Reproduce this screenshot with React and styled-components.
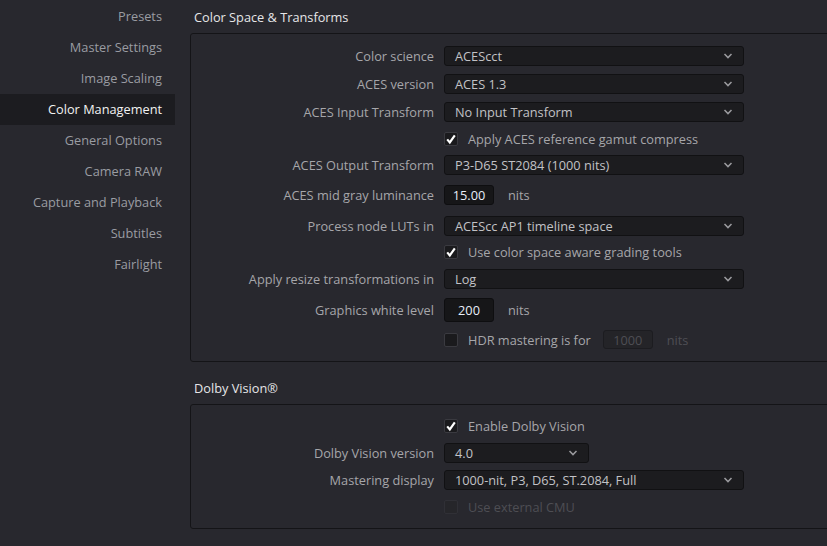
import styled, { createGlobalStyle } from "styled-components"

const GlobalStyle = createGlobalStyle`
    body {
        margin: 0;
        background-color: #28282e;
        font-family: "Open Sans", "Liberation Sans", sans-serif;
        overflow: hidden;
    }
`

const navItems = [
    "Presets",
    "Master Settings",
    "Image Scaling",
    "Color Management",
    "General Options",
    "Camera RAW",
    "Capture and Playback",
    "Subtitles",
    "Fairlight",
]

function Chevron() {
    return (
        <svg width="10" height="6" viewBox="0 0 10 6">
            <polyline points="1.5,1 5,4.6 8.5,1" fill="none" stroke="#9a9a9e" strokeWidth="1.5" />
        </svg>
    )
}

function Check({ checked, disabled, children }) {
    return (
        <CheckWrap>
            <Box $disabled={disabled}>
                {checked && (
                    <svg width="14" height="14" viewBox="0 0 14 14">
                        <path d="M3.2 7.4 L5.8 10.4 L10.8 3.4" fill="none" stroke="#fff" strokeWidth="2.2" />
                    </svg>
                )}
            </Box>
            <CheckText $disabled={disabled}>{children}</CheckText>
        </CheckWrap>
    )
}

function Select({ value, width = 300 }) {
    return (
        <Dropdown $w={width}>
            <span>{value}</span>
            <Chevron />
        </Dropdown>
    )
}

function App() {
    return (
        <Page>
            <GlobalStyle />
            <Sidebar>
                {navItems.map((item) => (
                    <NavItem key={item} $active={item === "Color Management"}>{item}</NavItem>
                ))}
            </Sidebar>
            <Main>
                <SectionTitle $top={1}>Color Space &amp; Transforms</SectionTitle>
                <Panel $pt={8} $pb={7}>
                    <Row $h={28}>
                        <Label>Color science</Label>
                        <Select value="ACEScct" />
                    </Row>
                    <Row $h={28}>
                        <Label>ACES version</Label>
                        <Select value="ACES 1.3" />
                    </Row>
                    <Row $h={28}>
                        <Label>ACES Input Transform</Label>
                        <Select value="No Input Transform" />
                    </Row>
                    <Row $h={26}>
                        <Label />
                        <Check checked>Apply ACES reference gamut compress</Check>
                    </Row>
                    <Row $h={26}>
                        <Label>ACES Output Transform</Label>
                        <Select value="P3-D65 ST2084 (1000 nits)" />
                    </Row>
                    <Row $h={34}>
                        <Label>ACES mid gray luminance</Label>
                        <NumberBox $h={20}>15.00</NumberBox>
                        <Unit>nits</Unit>
                    </Row>
                    <Row $h={28}>
                        <Label>Process node LUTs in</Label>
                        <Select value="ACEScc AP1 timeline space" />
                    </Row>
                    <Row $h={24}>
                        <Label />
                        <Check checked>Use color space aware grading tools</Check>
                    </Row>
                    <Row $h={30}>
                        <Label>Apply resize transformations in</Label>
                        <Select value="Log" />
                    </Row>
                    <Row $h={31}>
                        <Label>Graphics white level</Label>
                        <NumberBox $h={24}>200</NumberBox>
                        <Unit>nits</Unit>
                    </Row>
                    <Row $h={29}>
                        <Label />
                        <Check>HDR mastering is for</Check>
                        <NumberBox $h={19} $disabled>1000</NumberBox>
                        <Unit $disabled>nits</Unit>
                    </Row>
                </Panel>

                <SectionTitle $top={10}>Dolby Vision®</SectionTitle>
                <Panel $pt={8} $pb={8}>
                    <Row $h={26}>
                        <Label />
                        <Check checked>Enable Dolby Vision</Check>
                    </Row>
                    <Row $h={27}>
                        <Label>Dolby Vision version</Label>
                        <Select value="4.0" width={145} />
                    </Row>
                    <Row $h={28}>
                        <Label>Mastering display</Label>
                        <Select value="1000-nit, P3, D65, ST.2084, Full" />
                    </Row>
                    <Row $h={26}>
                        <Label />
                        <Check disabled>Use external CMU</Check>
                    </Row>
                </Panel>
            </Main>
        </Page>
    )
} export default App


const Page = styled.div`
    display: flex;
    width: 827px;
    height: 546px;
    background-color: #28282e;
    overflow: hidden;
`

const Sidebar = styled.div`
    width: 175px;
    flex-shrink: 0;
    padding-top: 1px;
    display: flex;
    flex-direction: column;
`

const NavItem = styled.div`
    height: 31px;
    line-height: 31px;
    padding-right: 13px;
    text-align: right;
    font-size: 12.75px;
    color: ${(p) => (p.$active ? "#f2f2f2" : "#9a9ca2")};
    background-color: ${(p) => (p.$active ? "#1c1c20" : "transparent")};
`

const Main = styled.div`
    flex: 1;
    min-width: 0;
    padding-left: 15px;
    display: flex;
    flex-direction: column;
`

const SectionTitle = styled.div`
    height: 32px;
    margin-top: ${(p) => p.$top}px;
    padding-left: 4px;
    display: flex;
    align-items: center;
    font-size: 12.75px;
    color: #e6e6e8;
`

const Panel = styled.div`
    width: 700px;
    border: 1px solid #141417;
    border-radius: 3px;
    padding-top: ${(p) => p.$pt}px;
    padding-bottom: ${(p) => p.$pb}px;
    display: flex;
    flex-direction: column;
`

const Row = styled.div`
    height: ${(p) => p.$h}px;
    display: flex;
    align-items: center;
    gap: 10px;
`

const Label = styled.div`
    width: 243px;
    flex-shrink: 0;
    text-align: right;
    font-size: 12.75px;
    color: #a6a6aa;
`

const Dropdown = styled.div`
    width: ${(p) => p.$w}px;
    height: 20px;
    box-sizing: border-box;
    padding: 0 10px 0 10px;
    display: flex;
    align-items: center;
    justify-content: space-between;
    background-color: #1c1c1f;
    border: 1px solid #111113;
    border-radius: 3px;
    font-size: 12.75px;
    color: #c2c2c6;
`

const NumberBox = styled.div`
    width: 50px;
    height: ${(p) => p.$h}px;
    box-sizing: border-box;
    display: flex;
    align-items: center;
    justify-content: center;
    margin-left: ${(p) => (p.$disabled ? "2px" : "0")};
    background-color: ${(p) => (p.$disabled ? "#242428" : "#161618")};
    border: 1px solid ${(p) => (p.$disabled ? "#1c1c20" : "#0e0e10")};
    border-radius: 3px;
    font-size: 12.75px;
    color: ${(p) => (p.$disabled ? "#4e4e54" : "#e8eef8")};
`

const Unit = styled.span`
    margin-left: 4px;
    font-size: 12.75px;
    color: ${(p) => (p.$disabled ? "#4e4e54" : "#a6a6aa")};
`

const CheckWrap = styled.div`
    display: flex;
    align-items: center;
    gap: 10px;
`

const Box = styled.div`
    width: 14px;
    height: 14px;
    box-sizing: border-box;
    display: flex;
    align-items: center;
    justify-content: center;
    background-color: ${(p) => (p.$disabled ? "#26262a" : "#1a1a1d")};
    border: 1px solid ${(p) => (p.$disabled ? "#303036" : "#3a3a40")};
    border-radius: 2px;

    & svg {
        flex-shrink: 0;
    }
`

const CheckText = styled.span`
    font-size: 12.75px;
    color: ${(p) => (p.$disabled ? "#4e4e54" : "#a6a6aa")};
`
